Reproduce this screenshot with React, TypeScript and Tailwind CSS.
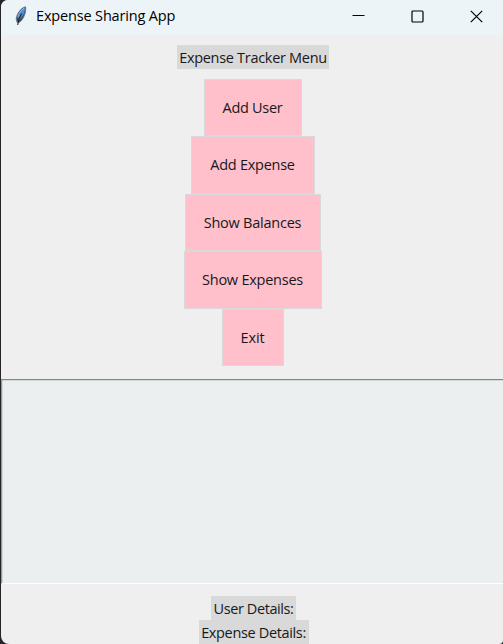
import React from "react";

const buttons = [
  { label: "Add User", box: "w-[98px] h-[57px]", text: "tracking-[-0.3px]" },
  { label: "Add Expense", box: "w-[124px] h-[58px]", text: "tracking-[-0.26px]" },
  { label: "Show Balances", box: "w-[136px] h-[57px]", text: "tracking-[-0.24px]" },
  { label: "Show Expenses", box: "w-[138px] h-[58px]", text: "tracking-[-0.24px]" },
  { label: "Exit", box: "w-[62px] h-[57px]", text: "tracking-[-0.1px]" },
];

function Feather() {
  return (
    <svg width="14" height="21" viewBox="0 0 14 21" className="shrink-0">
      <path d="M11.6 .8C7.4 1.7 3.3 6.5 2.2 12.5L3 16.2 5.2 16.4C9.3 13.8 12.4 6.8 11.6 .8Z" fill="#34506e" stroke="#6f767c" strokeWidth=".9" />
      <path d="M11 1.6C7 3.4 4.4 8 4 14.2 8.6 11.5 11.2 6.6 11 1.6Z" fill="#4a8fdb" />
      <path d="M10 2.5C6.8 4 4.6 7.7 3.8 11.5" fill="none" stroke="#a5c8e8" strokeWidth=".9" />
      <path d="M7.6 7.5 5 12.8 3.7 19" fill="none" stroke="#1d2329" strokeWidth="1.1" />
    </svg>
  );
}

function TitleBar() {
  return (
    <header className="flex h-[35px] shrink-0 items-start bg-[#ecf4f8] text-black">
      <div className="flex h-8 flex-1 items-center pl-[13px]">
        <Feather />
        <span className="ml-2 whitespace-nowrap text-[14.5px] leading-5 tracking-[-0.16px]">Expense Sharing App</span>
      </div>
      <div className="flex h-8 items-center gap-[46px] pr-[20px]">
        <svg width="13" height="13" viewBox="0 0 13 13"><path d="M.5 5.5h12" stroke="black" /></svg>
        <svg width="13" height="13" viewBox="0 0 13 13"><rect x="1" y="1" width="11" height="11" rx="1" fill="none" stroke="black" strokeWidth="1.2" /></svg>
        <svg width="13" height="13" viewBox="0 0 13 13"><path d="m.8.8 11.4 11.4m0-11.4L.8 12.2" stroke="black" strokeWidth="1.2" /></svg>
      </div>
    </header>
  );
}

export default function App() {
  return (
    <div className="h-[644px] w-[503px] overflow-hidden bg-[#25252a] pl-px font-['Open_Sans',sans-serif]">
      <main className="flex h-full flex-col overflow-hidden rounded-tl-[7px] rounded-br-[4px] rounded-bl-[8px] bg-[#efefef] text-[14.5px] text-[#18181b]">
        <TitleBar />
        <section className="flex h-[344px] shrink-0 flex-col items-center pt-[10px] pl-[2px]">
          <div className="mb-[10px] flex h-[24px] w-[152px] shrink-0 items-center justify-center whitespace-nowrap bg-[#d9d9d9] pt-[2px] tracking-[-0.3px]">Expense Tracker Menu</div>
          {buttons.map(({ label, box, text }) => (
            <button key={label} className={`flex shrink-0 items-center justify-center border border-[#d9d9d9] bg-[#ffc0cb] pr-px ${box}`}>
              <span className={`whitespace-nowrap ${text}`}>{label}</span>
            </button>
          ))}
        </section>
        <div className="h-[205px] shrink-0 border-t border-b border-l border-t-[#858585] border-b-white border-l-[#989898] bg-[#ebeff0] shadow-[inset_1px_1px_0_#d4d7d8]" />
        <section className="flex flex-1 flex-col items-center pt-3 pl-[3px]">
          <div className="flex h-[24px] w-[85px] shrink-0 items-center justify-center whitespace-nowrap bg-[#d9d9d9] pt-[2px] tracking-[-0.4px]">User Details:</div>
          <div className="flex h-[24px] w-[110px] shrink-0 items-center justify-center whitespace-nowrap bg-[#d9d9d9] pt-[2px] tracking-[-0.35px]">Expense Details:</div>
        </section>
      </main>
    </div>
  );
}
